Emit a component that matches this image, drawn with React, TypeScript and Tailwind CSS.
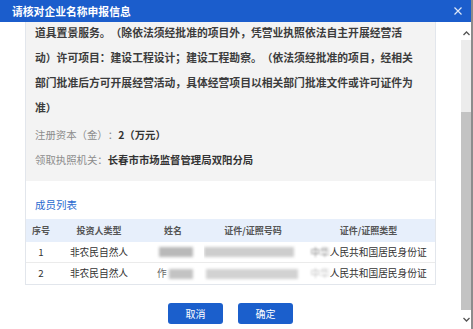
import { ReactNode } from 'react';

const font = "font-['Noto_Sans_CJK_SC','Noto_Sans',sans-serif]";

function Blur({ w, ml = 0, tone = 'bg-[#c4c4c4]' }: { w: number; ml?: number; tone?: string }) {
  return <div className={`h-[10px] blur-[1.5px] ${tone}`} style={{ width: w, marginLeft: ml }} />;
}

function Cell({ children, className = '' }: { children?: ReactNode; className?: string }) {
  return <div className={`flex items-center justify-center overflow-hidden whitespace-nowrap ${className}`}>{children}</div>;
}

export default function App() {
  const cols = 'grid grid-cols-[30px_86px_62px_98px_1fr]';
  return (
    <div className={`w-[473px] h-[329px] overflow-hidden bg-white flex flex-col border-r-2 border-[#8c8c8c] [text-spacing-trim:space-all] ${font}`}>
      {/* header */}
      <div className="h-[22px] shrink-0 bg-[#1b5dcc] flex items-center justify-between pl-[12px] pr-[9px]">
        <span className="text-[10.8px] font-bold text-white leading-none">请核对企业名称申报信息</span>
        <svg width="8" height="8" viewBox="0 0 8 8" className="text-[#dfe8f8]">
          <path d="M0.5 0.5L7.5 7.5M7.5 0.5L0.5 7.5" stroke="currentColor" strokeWidth="1.2" />
        </svg>
      </div>

      <div className="flex-1 flex min-h-0">
        <div className="flex-1 flex flex-col px-[25px] min-w-0">
          <div className="border-x border-b border-[#e2e6ec]">
            {/* scope section */}
            <div className="bg-[#f3f3f3] px-[9px] pb-[9px] overflow-hidden">
              <div className="-mt-[2px] text-[10.8px] leading-[25px] font-bold text-[#3c3c3c] whitespace-nowrap">
                <div>道具置景服务。（除依法须经批准的项目外，凭营业执照依法自主开展经营活</div>
                <div>动）许可项目：建设工程设计；建设工程勘察。（依法须经批准的项目，经相关</div>
                <div>部门批准后方可开展经营活动，具体经营项目以相关部门批准文件或许可证件为</div>
                <div>准）</div>
              </div>
              <div className="mt-[2px] text-[10.4px] leading-[25px] whitespace-nowrap">
                <div>
                  <span className="text-[#8c8c8c]">注册资本（金）：</span>
                  <span className="font-bold text-[#333]">2（万元）</span>
                </div>
                <div>
                  <span className="text-[#8c8c8c]">领取执照机关：</span>
                  <span className="font-bold text-[#333]">长春市市场监督管理局双阳分局</span>
                </div>
              </div>
            </div>

            {/* members */}
            <div className="pt-[14px]">
              <div className="px-[9px] mb-[4px] text-[10.5px] leading-[20px] text-[#2a6bd0]">成员列表</div>
              <div className={`${cols} h-[23px] bg-[#e7effb] text-[9px] font-bold text-[#555]`}>
                <Cell>序号</Cell>
                <Cell>投资人类型</Cell>
                <Cell>姓名</Cell>
                <Cell>证件/证照号码</Cell>
                <Cell>证件/证照类型</Cell>
              </div>
              <div className={`${cols} h-[21px] border-b border-[#ebebeb] text-[9.7px] text-[#333]`}>
                <Cell>1</Cell>
                <Cell>非农民自然人</Cell>
                <Cell className="justify-start pl-[17px]"><Blur w={34} tone="bg-[#b9b9b9]" /></Cell>
                <Cell className="justify-start"><Blur w={90} tone="bg-[#cdcdcd]" /></Cell>
                <Cell>
                  <span className="opacity-60 blur-[0.8px]">中华</span>人民共和国居民身份证
                </Cell>
              </div>
              <div className={`${cols} h-[21px] text-[9.7px] text-[#333]`}>
                <Cell>2</Cell>
                <Cell>非农民自然人</Cell>
                <Cell className="justify-start pl-[15px]">
                  <span className="text-[#666]">作</span>
                  <Blur w={24} ml={2} tone="bg-[#c3c3c3]" />
                </Cell>
                <Cell className="justify-start pl-[2px]"><Blur w={92} tone="bg-[#d2d2d2]" /></Cell>
                <Cell>
                  <span className="opacity-30 blur-[1.2px]">中华</span>人民共和国居民身份证
                </Cell>
              </div>
            </div>
          </div>

          <div className="mt-[18px] flex justify-center gap-[15px]">
            <button className="w-[55px] h-[21px] rounded-[3px] bg-[#1b5fcc] text-white text-[10px] leading-none">取消</button>
            <button className="w-[55px] h-[21px] rounded-[3px] bg-[#1b5fcc] text-white text-[10px] leading-none">确定</button>
          </div>
        </div>

        {/* scrollbar */}
        <div className="w-[10px] shrink-0 flex flex-col bg-white">
          <div className="h-[18px] flex items-end justify-center pb-[4px]">
            <svg width="7" height="5" viewBox="0 0 7 5"><path d="M0.5 4L3.5 1L6.5 4" fill="none" stroke="#555" strokeWidth="1.3" /></svg>
          </div>
          <div className="flex-1 flex flex-col bg-[#ececec]">
            <div className="h-[72px]" />
            <div className="flex-1 bg-[#c3c3c3]" />
          </div>
          <div className="h-[19px] flex items-center justify-center">
            <svg width="7" height="5" viewBox="0 0 7 5"><path d="M0.5 1L3.5 4L6.5 1" fill="none" stroke="#555" strokeWidth="1.3" /></svg>
          </div>
        </div>
      </div>
    </div>
  );
}
